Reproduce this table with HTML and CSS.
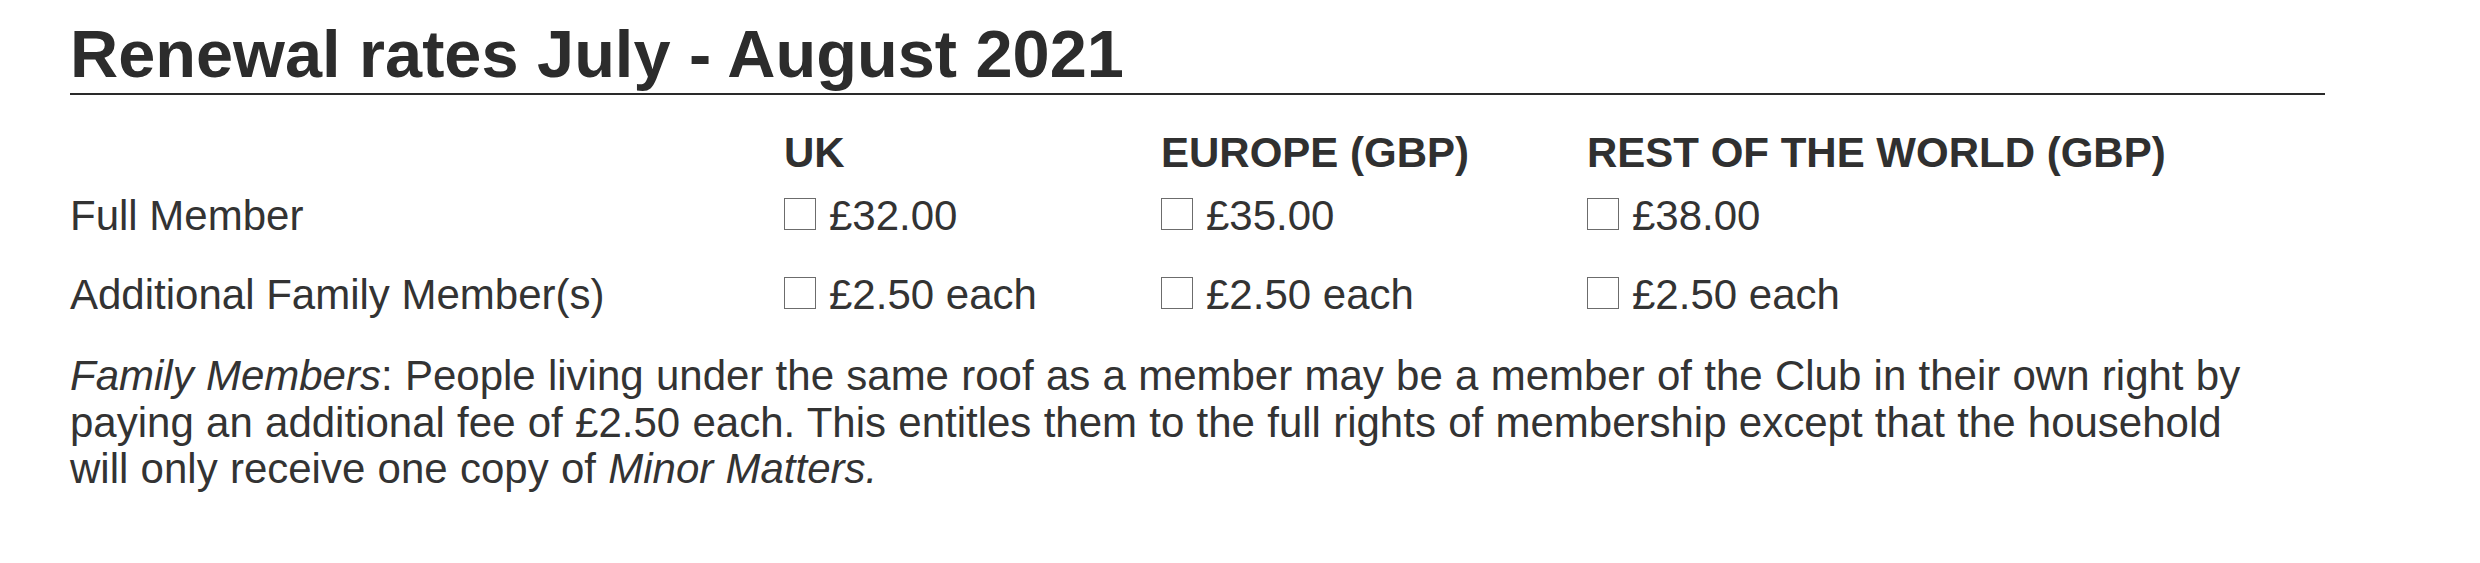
FILE: index.html
```html
<!DOCTYPE html>
<html lang="en">
<head>
<meta charset="utf-8">
<title>Renewal rates July - August 2021</title>
<link rel="stylesheet" href="styles.css">
</head>
<body>
<main class="sheet">
  <h1 class="title">Renewal rates July - August 2021</h1>
  <div class="rates">
    <div class="row head">
      <span class="label"></span>
      <span class="col">UK</span>
      <span class="col">EUROPE (GBP)</span>
      <span class="col">REST OF THE WORLD (GBP)</span>
    </div>
    <div class="row full">
      <span class="label">Full Member</span>
      <span class="opt"><i class="box"></i>£32.00</span>
      <span class="opt"><i class="box"></i>£35.00</span>
      <span class="opt"><i class="box"></i>£38.00</span>
    </div>
    <div class="row family">
      <span class="label">Additional Family Member(s)</span>
      <span class="opt"><i class="box"></i>£2.50 each</span>
      <span class="opt"><i class="box"></i>£2.50 each</span>
      <span class="opt"><i class="box"></i>£2.50 each</span>
    </div>
  </div>
  <p class="note"><em>Family Members</em>: People living under the same roof as a member may be a member of the Club in their own right by<br>paying an additional fee of £2.50 each. This entitles them to the full rights of membership except that the household<br>will only receive one copy of <em>Minor Matters.</em></p>
</main>
</body>
</html>
```
FILE: styles.css
```css
html, body {
  margin: 0;
  padding: 0;
  background: #ffffff;
}

.sheet {
  padding: 15px 0 0 70px;
  font-family: "Liberation Sans", Arial, Helvetica, sans-serif;
  color: #333333;
}

.title {
  width: 2255px;
  margin: 0;
  font-size: 66.7px;
  font-weight: bold;
  line-height: 78px;
  color: #2c2c2c;
  border-bottom: 2px solid #2a2a2a;
  white-space: nowrap;
}

.rates {
  display: flex;
  flex-direction: column;
}

.row {
  display: grid;
  grid-template-columns: 714px 377px 426px auto;
  align-items: baseline;
  font-size: 42px;
  line-height: 50px;
  white-space: nowrap;
}

.row.head {
  margin-top: 33px;
  font-weight: bold;
  color: #303030;
}

.row.full {
  margin-top: 13px;
}

.row.family {
  margin-top: 29px;
}

.box {
  display: inline-block;
  width: 32px;
  height: 32px;
  margin-right: 13px;
  box-sizing: border-box;
  border: 1.5px solid #6c6c6c;
  vertical-align: baseline;
}

.note {
  margin: 33px 0 0 0;
  font-size: 42px;
  line-height: 46.5px;
  word-spacing: 0.6px;
  white-space: nowrap;
}

.note em {
  font-style: italic;
}
```
